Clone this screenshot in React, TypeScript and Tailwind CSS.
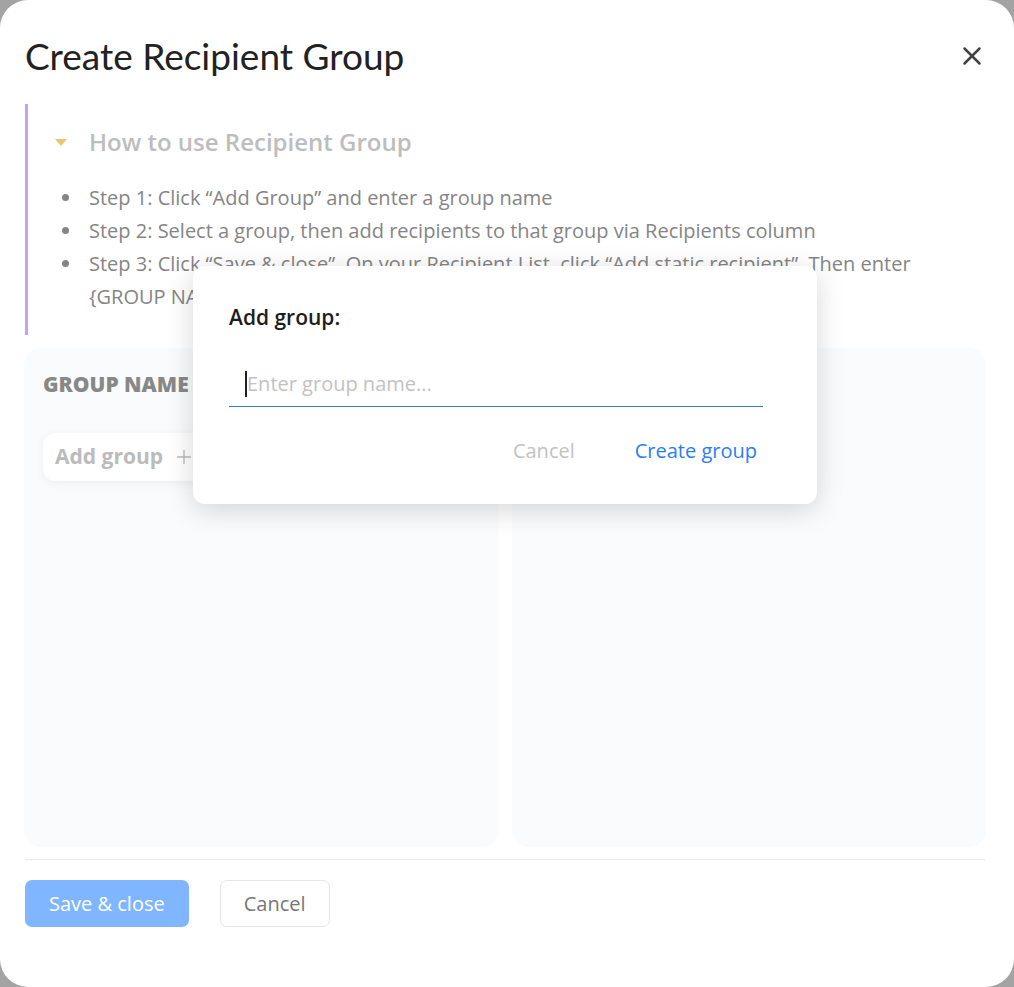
import { X, Plus } from "lucide-react";

const steps = [
  "Step 1: Click \u201cAdd Group\u201d and enter a group name",
  "Step 2: Select a group, then add recipients to that group via Recipients column",
  "Step 3: Click \u201cSave & close\u201d. On your Recipient List, click \u201cAdd static recipient\u201d. Then enter {GROUP NAME} as the recipient",
];

const App = () => {
  return (
    <div className="h-[987px] w-full bg-[#a3a3a3] font-['Open_Sans',sans-serif]">
      <div className="relative flex h-full flex-col rounded-[28px] bg-white pl-[25px] pr-[29px]">
        {/* Header */}
        <div className="flex items-center justify-between pt-[34px]">
          <h1 className="font-['Lato',sans-serif] text-[37px] leading-[44px] font-normal text-[#222]">
            Create Recipient Group
          </h1>
          <button className="mr-[-2px] text-[#444]" aria-label="Close">
            <X className="h-[30px] w-[30px]" strokeWidth={2} />
          </button>
        </div>

        {/* How to use */}
        <div className="mt-[26px] h-[231px] border-l-[3px] border-[#c9a0f9] pl-[27px] pt-[22px]">
          <div className="flex items-center gap-[22px]">
            <span className="h-0 w-0 border-x-[6px] border-t-[7px] border-x-transparent border-t-[#ecc66e]" />
            <span className="text-[24px] leading-[32px] font-semibold text-[#bdbdbd]">
              How to use Recipient Group
            </span>
          </div>
          <ul className="mt-[23px] text-[20px] leading-[33px] text-[#858585]">
            {steps.map((s) => (
              <li key={s} className="flex pr-[40px]">
                <span className="ml-[7px] mr-[20px] mt-[13px] h-[7px] w-[7px] shrink-0 rounded-full bg-[#858585]" />
                <span>{s}</span>
              </li>
            ))}
          </ul>
        </div>

        {/* Columns */}
        <div className="mt-[13px] grid h-[497px] grid-cols-2 gap-[15px]">
          <div className="rounded-[16px] bg-[#fafbfc] px-[18px] pt-[24px] shadow-[0_1px_3px_rgba(0,0,0,0.04)]">
            <div className="text-[21px] leading-[24px] font-extrabold text-[#888]">GROUP NAME</div>
            <button className="mt-[37px] flex h-[48px] items-center gap-[10px] rounded-[12px] bg-white px-[12px] text-[21px] font-bold text-[#bbb] shadow-[0_2px_10px_rgba(0,0,0,0.06)]">
              Add group
              <Plus className="h-[22px] w-[22px]" strokeWidth={1.5} />
            </button>
          </div>
          <div className="rounded-[16px] bg-[#fafbfc] shadow-[0_1px_3px_rgba(0,0,0,0.04)]" />
        </div>

        {/* Footer */}
        <div className="mt-[14px] flex gap-[31px] border-t border-[#e8e8e8] pt-[20px]">
          <button className="h-[47px] rounded-[7px] bg-[#80b6ff] px-[24px] text-[20px] text-white">
            Save &amp; close
          </button>
          <button className="h-[47px] rounded-[7px] border border-[#e6e6e6] bg-white px-[23px] text-[20px] text-[#777]">
            Cancel
          </button>
        </div>

        {/* Add group popup */}
        <div className="absolute left-[193px] top-[266px] w-[624px] rounded-[12px] bg-white px-[36px] pt-[37px] pb-[39px] shadow-[0_6px_28px_rgba(0,0,0,0.16)]">
          <div className="text-[21px] leading-[28px] font-semibold text-[#1d1d1d]">Add group:</div>
          <div className="mt-[30px] mr-[18px] flex h-[46px] items-center border-b border-[#2f7be0] pl-[16px]">
            <span className="h-[26px] w-[2px] bg-[#222]" />
            <input
              className="w-full bg-transparent text-[20px] text-[#333] outline-none placeholder:text-[#c2c2c2]"
              placeholder="Enter group name..."
            />
          </div>
          <div className="mt-[30px] mr-[24px] flex justify-end gap-[60px] text-[20px] leading-[28px]">
            <button className="text-[#c2c2c2]">Cancel</button>
            <button className="text-[#2a7ef2]">Create group</button>
          </div>
        </div>
      </div>
    </div>
  );
};

export default App;
